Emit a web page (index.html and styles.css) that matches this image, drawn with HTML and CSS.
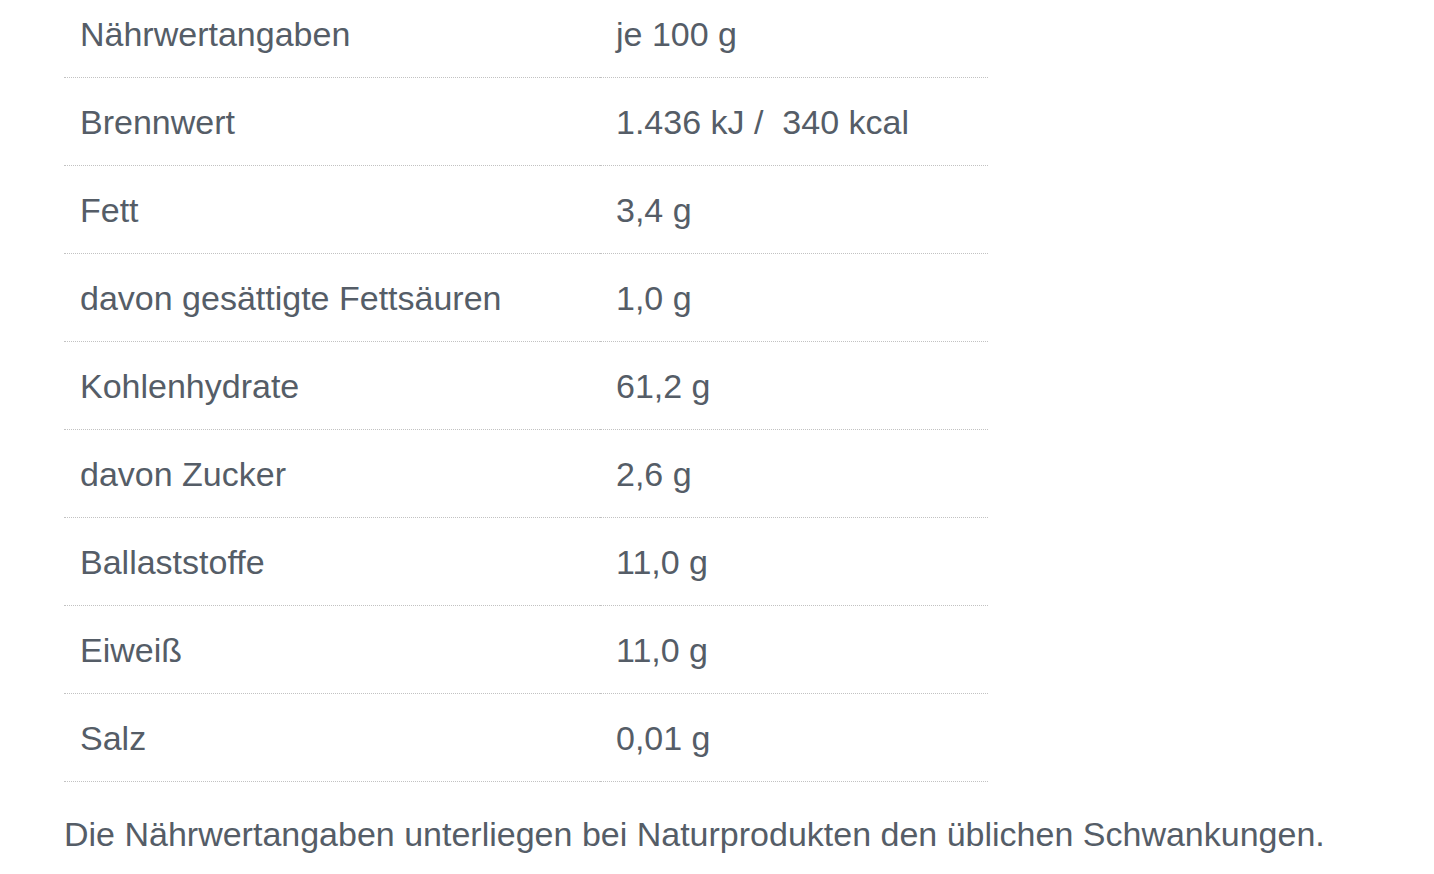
FILE: index.html
```html
<!DOCTYPE html>
<html lang="de">
<head>
<meta charset="utf-8">
<title>Nährwertangaben</title>
<link rel="stylesheet" href="styles.css">
</head>
<body>
<div class="wrap">
  <table class="nutri">
    <tbody>
      <tr><td class="c1">Nährwertangaben</td><td class="c2">je 100 g</td></tr>
      <tr><td class="c1">Brennwert</td><td class="c2">1.436 kJ /&nbsp; 340 kcal</td></tr>
      <tr><td class="c1">Fett</td><td class="c2">3,4 g</td></tr>
      <tr><td class="c1">davon gesättigte Fettsäuren</td><td class="c2">1,0 g</td></tr>
      <tr><td class="c1">Kohlenhydrate</td><td class="c2">61,2 g</td></tr>
      <tr><td class="c1">davon Zucker</td><td class="c2">2,6 g</td></tr>
      <tr><td class="c1">Ballaststoffe</td><td class="c2">11,0 g</td></tr>
      <tr><td class="c1">Eiweiß</td><td class="c2">11,0 g</td></tr>
      <tr><td class="c1">Salz</td><td class="c2">0,01 g</td></tr>
    </tbody>
  </table>
  <p class="note">Die Nährwertangaben unterliegen bei Naturprodukten den üblichen Schwankungen.</p>
</div>
</body>
</html>
```

FILE: styles.css
```css
html, body {
  margin: 0;
  padding: 0;
  background: #ffffff;
}

body {
  font-family: "Liberation Sans", Arial, sans-serif;
  font-size: 34px;
  color: #555d67;
}

.wrap {
  margin: -10px 0 0 64px;
  width: 1300px;
}

.nutri {
  border-collapse: collapse;
  width: 924px;
  table-layout: fixed;
}

.nutri td {
  height: 87px;
  padding: 0 16px;
  border-bottom: 1px dotted #c2c2c2;
  vertical-align: middle;
  line-height: 40px;
  white-space: nowrap;
}

.nutri .c1 {
  width: 504px;
}

.nutri .c2 {
  width: 356px;
}

.note {
  margin: 28px 0 0 0;
  line-height: 48px;
  white-space: nowrap;
}
```
